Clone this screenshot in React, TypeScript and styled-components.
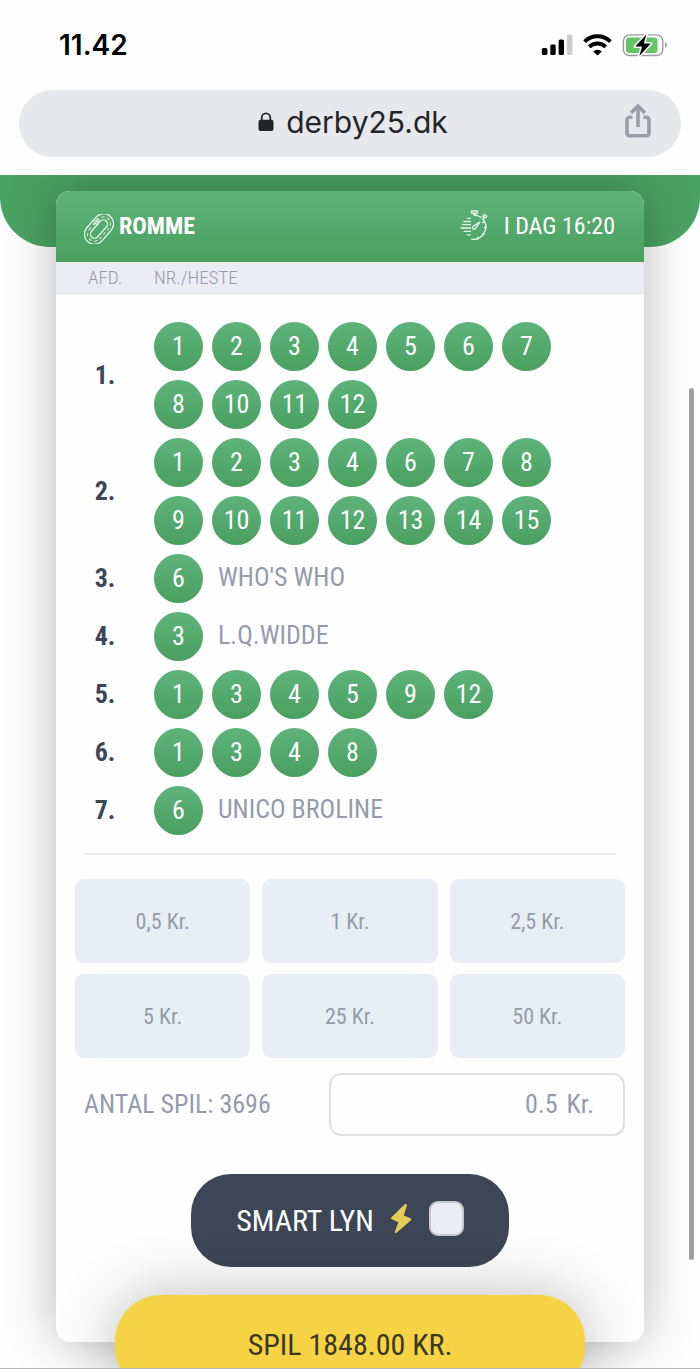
import React, { useState } from "react";
import styled, { createGlobalStyle } from "styled-components";

const GlobalStyle = createGlobalStyle`
  *, *::before, *::after { box-sizing: border-box; }
  body {
    margin: 0;
    background: #fefefe;
    font-family: "Roboto Condensed", "Liberation Sans Narrow", Roboto, sans-serif;
  }
  button, input { font: inherit; color: inherit; }
  button { border: 0; padding: 0; background: none; cursor: pointer; }
`;

const muted = "#959bac";
const ink = "#3d4656";
const greenFill = "linear-gradient(#5eb37c, #49a05e)";

const Screen = styled.div`
  display: flex;
  flex-direction: column;
  height: 100vh;
  min-height: 800px;
`;

const StatusBar = styled.header`
  display: flex;
  align-items: center;
  justify-content: space-between;
  height: 90px;
  padding: 0 32px 0 59px;
  font-family: Inter, sans-serif;
`;

const Clock = styled.time`
  font-size: 28px;
  font-weight: 600;
  color: #000;
`;

const StatusIcons = styled.div`
  display: flex;
  align-items: center;
  gap: 10px;
  svg { display: block; }
`;

const AddressBar = styled.div`
  display: grid;
  grid-template-columns: 1fr auto 1fr;
  align-items: center;
  height: 67px;
  margin: 0 19px 18px;
  padding: 0 30px 4px 36px;
  flex: none;
  border-radius: 34px;
  background: #e7e8ec;
  color: #232529;
  font-family: Inter, sans-serif;
`;

const Address = styled.button`
  grid-column: 2;
  display: flex;
  align-items: center;
  gap: 12px;
  font-size: 30px;
  line-height: 40px;
`;

const ShareButton = styled.button`
  justify-self: end;
  height: 36px;
  color: #9a9ea5;
  svg { display: block; }
`;

const Viewport = styled.main`
  position: relative;
  flex: 1;
  overflow: hidden;
  border-bottom: 1px solid #b9b9b9;
  margin-bottom: 3px;
`;

const Band = styled.div`
  height: 72px;
  border-radius: 0 0 50px 50px;
  background: #4aa262;
`;

const Ticket = styled.section`
  position: relative;
  margin: -56px 8% 0;
  padding-bottom: 75px;
  border-radius: 14px;
  background: #fefefe;
  box-shadow: 0 0 50px rgba(0, 0, 0, 0.28);
`;

const TicketHeader = styled.div`
  display: flex;
  align-items: center;
  justify-content: space-between;
  height: 71px;
  padding: 0 29px 2px 28px;
  border-radius: 14px 14px 0 0;
  background: ${greenFill};
  color: #fff;
  font-size: 24px;
`;

const Track = styled.h1`
  display: flex;
  align-items: center;
  gap: 5px;
  margin: 0;
  font-size: 24px;
  font-weight: 700;
  svg { margin-top: 6px; }
`;

const Start = styled.div`
  display: flex;
  align-items: center;
  gap: 15px;
`;

const Races = styled.table`
  width: 100%;
  border-collapse: collapse;
`;

const HeadCell = styled.th<{ $first?: boolean }>`
  width: ${(p) => (p.$first ? "98px" : "auto")};
  height: 33px;
  padding: 0 0 2px ${(p) => (p.$first ? "32px" : "0")};
  background: #ebecf2;
  color: ${muted};
  font-size: 19px;
  font-weight: 300;
  text-align: left;
`;

const RaceNumber = styled.th`
  padding: 0 0 10px;
  color: ${ink};
  font-size: 26px;
  font-weight: 700;
`;

const RaceCell = styled.td`
  padding: 0 0 9px;
`;

const RaceBody = styled.tbody`
  &::before {
    content: "";
    display: block;
    height: 27px;
  }
`;

const Horses = styled.div`
  display: flex;
  flex-wrap: wrap;
  align-items: center;
  gap: 9px;
  max-width: 420px;
`;

const Ball = styled.span`
  width: 49px;
  height: 49px;
  border-radius: 50%;
  background: ${greenFill};
  color: #fff;
  font-size: 26px;
  line-height: 48px;
  text-align: center;
`;

const HorseName = styled.span`
  padding: 0 0 4px 6px;
  color: ${muted};
  font-size: 26px;
`;

const Divider = styled.hr`
  height: 2px;
  margin: 9px 28px 24px;
  border: 0;
  background: #ececee;
`;

const Stakes = styled.div`
  display: grid;
  grid-template-columns: repeat(3, 1fr);
  gap: 11px 12px;
  margin: 0 19px 15px;
`;

const StakeButton = styled.button`
  height: 84px;
  border-radius: 9px;
  background: #e9edf4;
  color: ${muted};
  font-size: 22px;
`;

const Summary = styled.div`
  display: flex;
  align-items: center;
  justify-content: space-between;
  margin: 0 19px 38px 28px;
  color: ${muted};
  font-size: 26px;
`;

const GameCount = styled.span`
  padding-bottom: 2px;
`;

const AmountField = styled.label`
  display: flex;
  align-items: center;
  gap: 9px;
  width: 296px;
  height: 63px;
  padding: 0 29px 2px 16px;
  border: 2px solid #dedfe1;
  border-radius: 12px;
`;

const AmountInput = styled.input`
  flex: 1;
  min-width: 0;
  border: 0;
  padding: 0;
  outline: 0;
  background: none;
  text-align: right;
`;

const SmartToggle = styled.label`
  display: flex;
  align-items: center;
  justify-content: center;
  width: 318px;
  height: 93px;
  margin: 0 auto;
  border-radius: 40px;
  background: ${ink};
  color: #fff;
  font-size: 30px;
  svg { margin: 0 17px 4px 16px; }
`;

const SmartCheck = styled.input`
  appearance: none;
  width: 35px;
  height: 35px;
  margin: 0 0 4px;
  border: 2px solid #c9c9cb;
  border-radius: 9px;
  background: #ecedf2;
  &:checked { background: #f7d447; }
`;

const PlayButton = styled.button`
  position: absolute;
  bottom: -25px;
  left: 50%;
  width: 470px;
  height: 98px;
  margin-left: -235px;
  border-radius: 46px;
  background: #f6d344;
  box-shadow: 0 0 60px rgba(0, 0, 0, 0.27);
  color: #3a3821;
  font-size: 30px;
`;

const ScrollThumb = styled.div`
  position: absolute;
  top: 213px;
  right: 6px;
  bottom: 108px;
  width: 5px;
  border-radius: 3px;
  background: #9f9f9f;
`;

function SignalIcon() {
  return (
    <svg width="32" height="22" viewBox="0 0 32 22">
      <rect x="0.800" y="14" width="5.600" height="7" rx="1.600" />
      <rect x="9.300" y="10.500" width="5.400" height="10.500" rx="1.600" />
      <rect x="17.600" y="5.500" width="5.400" height="15.500" rx="1.600" />
      <rect x="26" y="0.500" width="5.400" height="20.500" rx="1.600" fill="#cbcbcb" />
    </svg>
  );
}

function WifiIcon() {
  return (
    <svg width="29" height="22" viewBox="0 0 29 22">
      <g fill="none" stroke="#000" strokeWidth="3.8">
        <path d="M1.6 7.6a18.2 18.2 0 0 1 25.8 0" />
        <path d="M6.3 12.9a11.6 11.6 0 0 1 16.4 0" />
      </g>
      <path d="M14.5 21.6l-4.300-4.200a6.200 6.200 0 0 1 8.600 0z" />
    </svg>
  );
}

function BatteryIcon() {
  return (
    <svg width="46" height="26" viewBox="0 0 46 26">
      <rect x="1.4" y="2.9" width="39.4" height="20.6" rx="6" fill="none" stroke="#9b9b9b" strokeWidth="1.4" />
      <path d="M43 10v6c2.4-.9 2.4-5.100 0-6z" fill="#9b9b9b" />
      <rect x="4" y="5.500" width="31.500" height="15.400" rx="3.200" fill="#65c466" />
      <path d="M24.300 2.600L13.200 14.600h6.800l-2.600 9.400L28.800 11.400h-6.900z" stroke="#fefefe" strokeWidth="3" strokeLinejoin="round" />
      <path d="M24.300 2.600L13.200 14.600h6.800l-2.600 9.400L28.800 11.400h-6.900z" />
    </svg>
  );
}

function LockIcon() {
  return (
    <svg width="16" height="20" viewBox="0 0 16 20">
      <path d="M3.700 9V5.700a4.300 4.300 0 0 1 8.600 0V9" fill="none" stroke="currentColor" strokeWidth="1.800" />
      <rect x="0.500" y="7.800" width="15" height="11.200" rx="2" fill="currentColor" />
    </svg>
  );
}

function ShareIcon() {
  return (
    <svg width="26" height="36" viewBox="0 0 26 36" fill="none" stroke="currentColor" strokeWidth="3.600">
      <path d="M7.500 13.300H4.500A2.500 2.500 0 0 0 2 15.800v13.400a2.500 2.500 0 0 0 2.500 2.500h17a2.500 2.500 0 0 0 2.500-2.500V15.800a2.500 2.500 0 0 0-2.500-2.500h-3" />
      <path d="M13 23V2.500M6 8.900l7-7 7 7" />
    </svg>
  );
}

function TrackIcon() {
  return (
    <svg width="30" height="30" viewBox="0 0 30 30" fill="none" stroke="#e6f4ea">
      <g transform="rotate(-49 15 15)">
        <rect x="-2" y="5" width="34" height="20" rx="10" strokeWidth="1.300" />
        <rect x="4.200" y="10.800" width="21.600" height="8.400" rx="4.200" strokeWidth="1.300" />
        <rect x="1.200" y="8" width="27.600" height="14" rx="7" strokeWidth="1" strokeDasharray="3.200 2.600" />
        <path d="M17 5.500v5.500M19 5.500v5.500M21 5.500v5.500M15.500 7.300h7M15.500 9.200h7" strokeWidth="0.900" />
      </g>
    </svg>
  );
}

function StopwatchIcon() {
  return (
    <svg width="29" height="31" viewBox="0 0 29 31" fill="none" stroke="#e6f4ea" strokeWidth="1.300" strokeLinecap="round">
      <path d="M11.500 29.200a12.400 12.400 0 0 0 11.500-20M14.500 5.200a12 12 0 0 1 6.500 2.200" />
      <path d="M11.500 1h6v2.200h-6zM13 3.400l1.500 1.800 1.500-1.800M22.800 6.100l1.600-1.800 2.300 2-1.600 1.800zM24.300 7.600l-1.600 1.700" />
      <path d="M12.900 16.600l7.200-4.800-5 7a1.500 1.500 0 0 1-2.200-2.200z" />
      <path d="M7.500 8.300h3M4 11.500h6.500M2.500 14.700h8M.8 18h9.700M4 21.300h6.500M7.500 24.800h3" />
      <path d="M24.300 17.500h2M22.300 23.800l1.500 1M17.800 27.200l.7 1.500M22.600 12.600l1.500-.7" />
    </svg>
  );
}

function BoltIcon() {
  return (
    <svg width="22" height="31" viewBox="0 0 22 31">
      <path d="M14.600 1.500L1.500 14.300c-.8.800-.6 1.600.4 2l6.400 3L4.800 29c-.3 1.200.8 1.700 1.700.8L20.800 17.400c.8-.8.600-1.700-.4-2.100l-6.600-2.900 3.100-10c.3-1.300-1.200-1.900-2.300-.9z" fill="#e3cb55" />
    </svg>
  );
}

interface Race {
  horses: number[];
  name?: string;
}

const races: Race[] = [
  { horses: [1, 2, 3, 4, 5, 6, 7, 8, 10, 11, 12] },
  { horses: [1, 2, 3, 4, 6, 7, 8, 9, 10, 11, 12, 13, 14, 15] },
  { horses: [6], name: "WHO'S WHO" },
  { horses: [3], name: "L.Q.WIDDE" },
  { horses: [1, 3, 4, 5, 9, 12] },
  { horses: [1, 3, 4, 8] },
  { horses: [6], name: "UNICO BROLINE" },
];

const stakes = ["0,5", "1", "2,5", "5", "25", "50"];

export default function App() {
  const [amount, setAmount] = useState("0.5");

  return (
    <Screen>
      <GlobalStyle />
      <StatusBar>
        <Clock>11.42</Clock>
        <StatusIcons>
          <SignalIcon />
          <WifiIcon />
          <BatteryIcon />
        </StatusIcons>
      </StatusBar>
      <AddressBar>
        <Address type="button">
          <LockIcon />
          derby25.dk
        </Address>
        <ShareButton type="button" aria-label="Del">
          <ShareIcon />
        </ShareButton>
      </AddressBar>
      <Viewport>
        <Band />
        <Ticket>
          <TicketHeader>
            <Track>
              <TrackIcon />
              ROMME
            </Track>
            <Start>
              <StopwatchIcon />
              I DAG 16:20
            </Start>
          </TicketHeader>
          <Races>
            <thead>
              <tr>
                <HeadCell $first>AFD.</HeadCell>
                <HeadCell>NR./HESTE</HeadCell>
              </tr>
            </thead>
            <RaceBody>
              {races.map((race, i) => (
                <tr key={i}>
                  <RaceNumber scope="row">{i + 1}.</RaceNumber>
                  <RaceCell>
                    <Horses>
                      {race.horses.map((n) => (
                        <Ball key={n}>{n}</Ball>
                      ))}
                      {race.name && <HorseName>{race.name}</HorseName>}
                    </Horses>
                  </RaceCell>
                </tr>
              ))}
            </RaceBody>
          </Races>
          <Divider />
          <Stakes>
            {stakes.map((s) => (
              <StakeButton key={s} type="button" onClick={() => setAmount(s.replace(",", "."))}>
                {s} Kr.
              </StakeButton>
            ))}
          </Stakes>
          <Summary>
            <GameCount>ANTAL SPIL: 3696</GameCount>
            <AmountField>
              <AmountInput
                aria-label="Indsats"
                value={amount}
                onChange={(e) => setAmount(e.target.value)}
              />
              Kr.
            </AmountField>
          </Summary>
          <SmartToggle>
            SMART LYN
            <BoltIcon />
            <SmartCheck type="checkbox" />
          </SmartToggle>
        </Ticket>
        <PlayButton type="button">SPIL 1848.00 KR.</PlayButton>
        <ScrollThumb />
      </Viewport>
    </Screen>
  );
}
